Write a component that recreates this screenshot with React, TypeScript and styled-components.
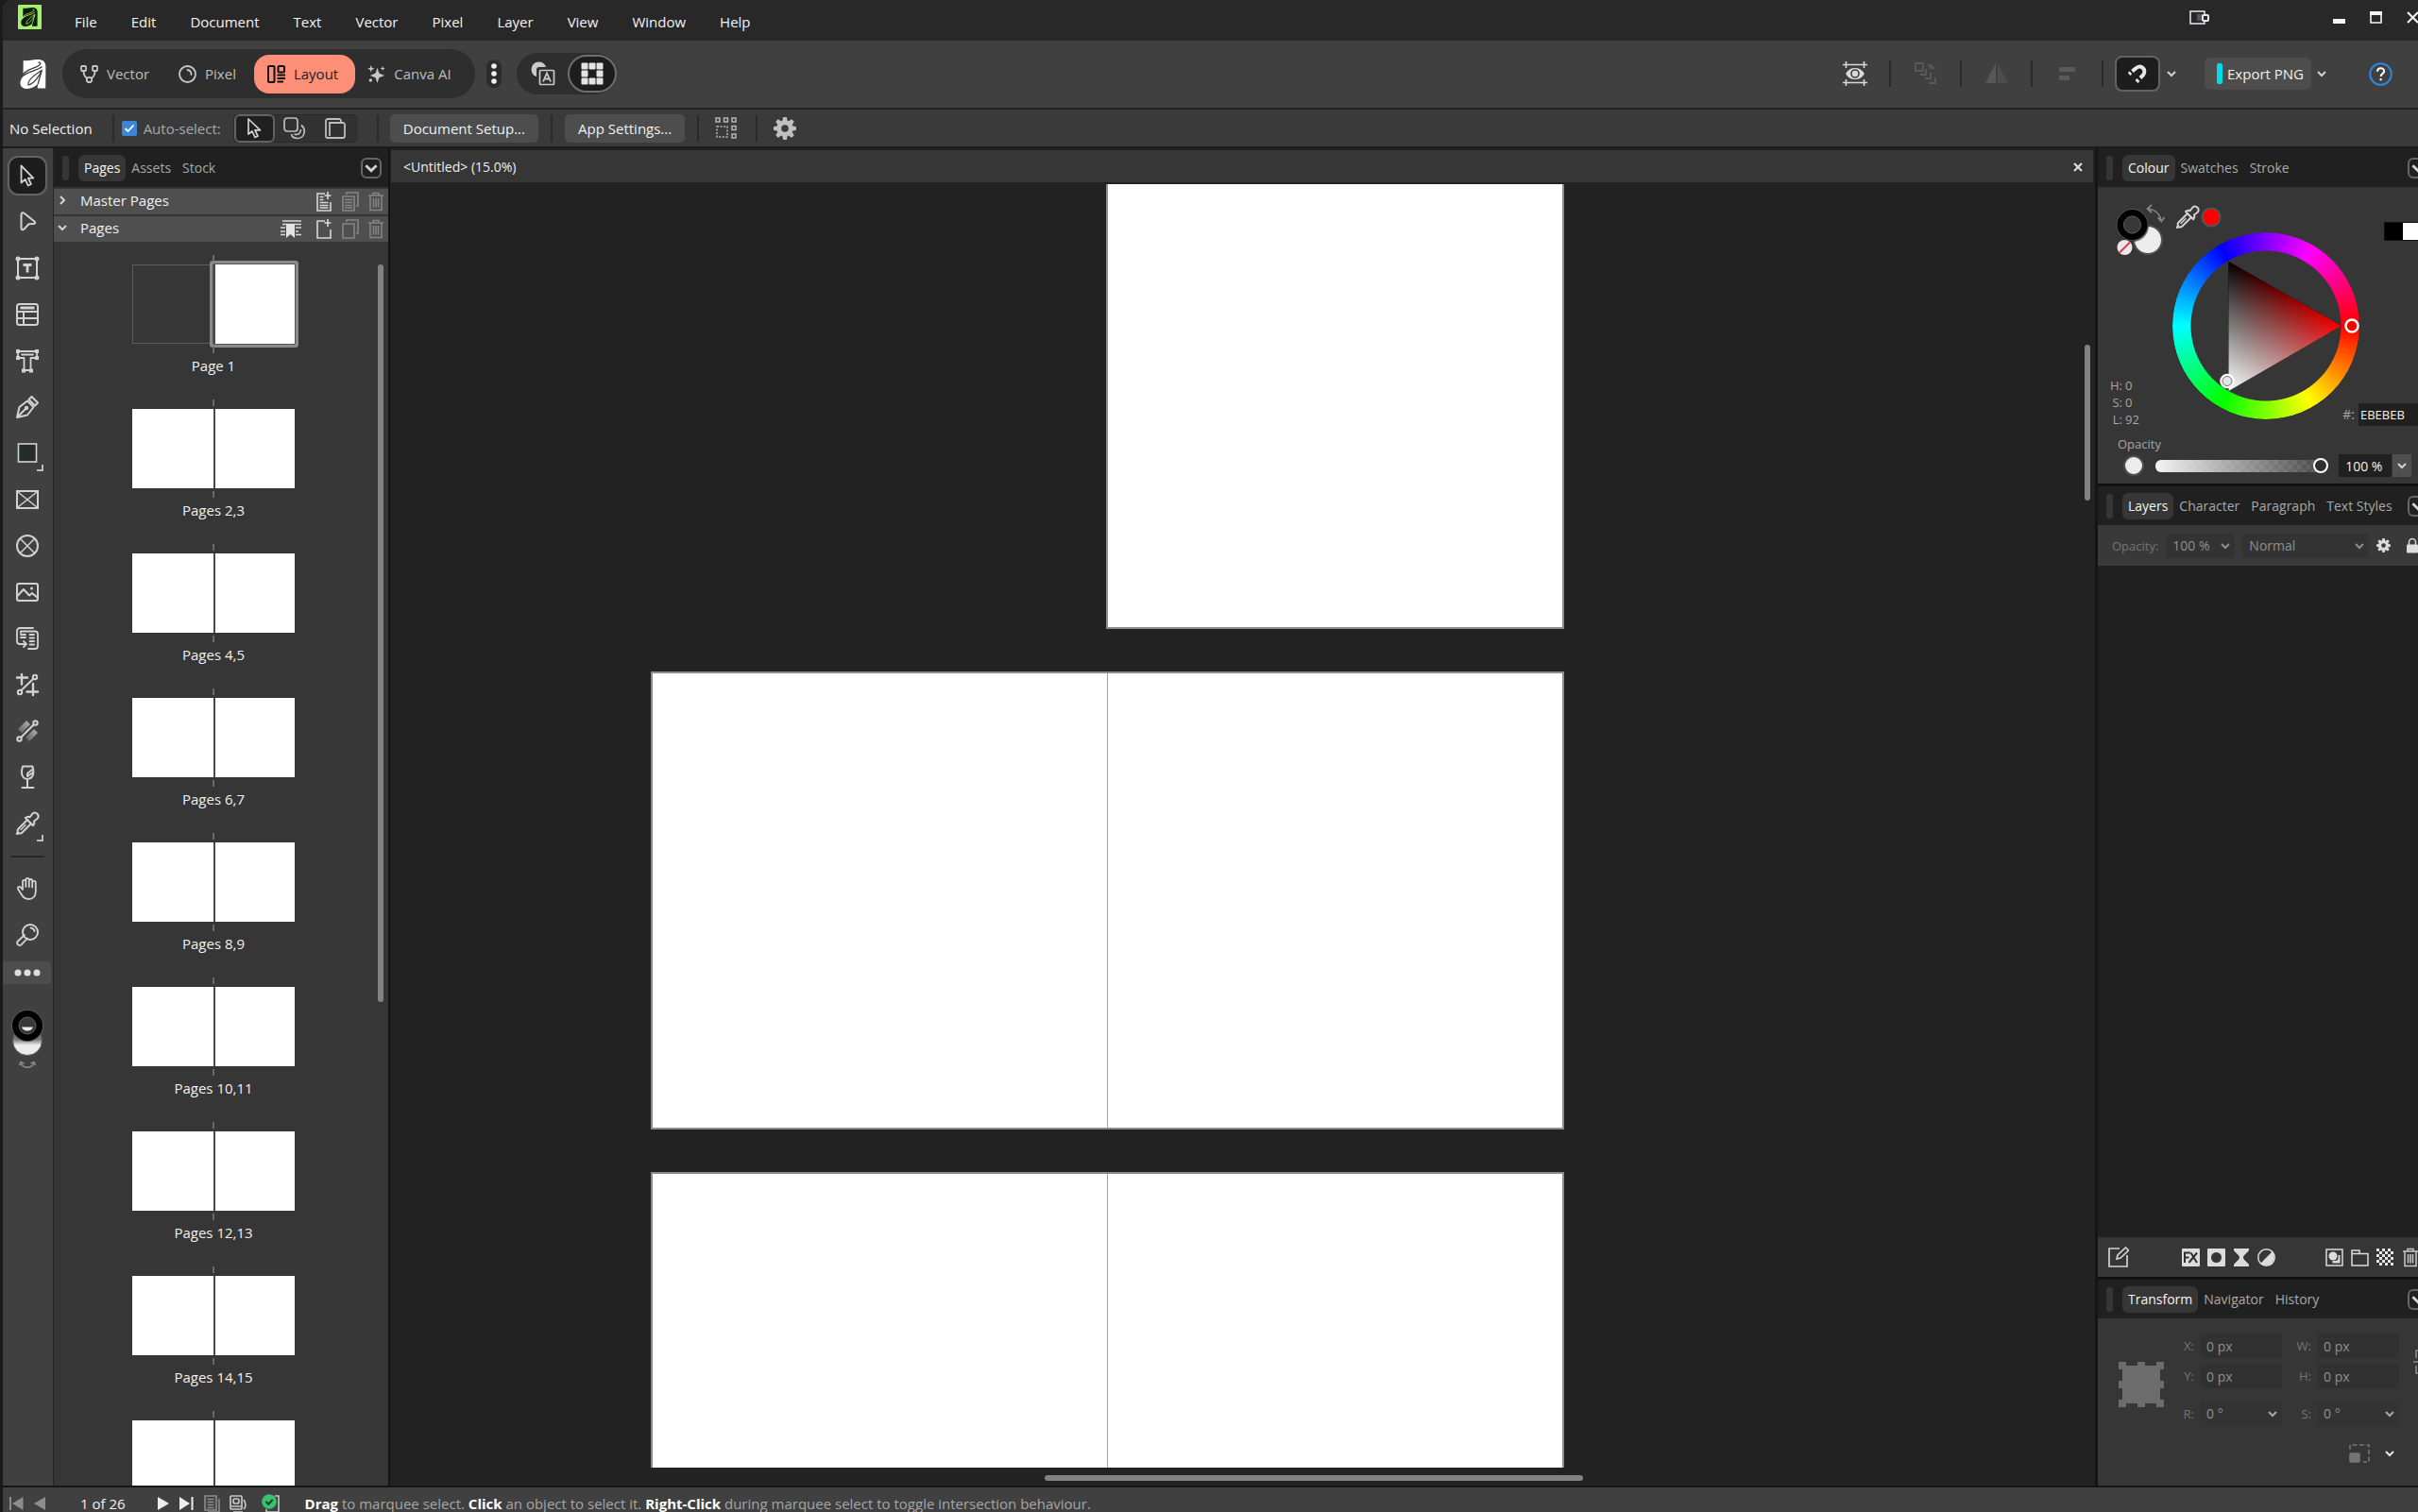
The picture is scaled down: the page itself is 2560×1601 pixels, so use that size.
import React from 'react';
import styled, { createGlobalStyle, css } from 'styled-components';

const GlobalStyle = createGlobalStyle`
  *, *::before, *::after { box-sizing: border-box; }
  html, body, #root { height: 100%; margin: 0; }
  body {
    overflow: hidden;
    background: #1b1b1d;
    color: #f0f0f0;
    font-family: 'Open Sans', 'Noto Sans', 'Liberation Sans', sans-serif;
    font-size: 15px;
    line-height: 20px;
  }
  button, input, select { font: inherit; color: inherit; margin: 0; }
  button { background: none; border: 0; padding: 0; cursor: pointer; }
  svg { display: block; flex: none; }
`;

/* ---------- window shell ---------- */

const Screen = styled.div`
  height: 100vh;
  overflow: hidden;
  padding-left: 3px;
`;

/* The window hangs a little past the right and bottom of the screen. */
const Window = styled.div`
  display: flex;
  flex-direction: column;
  width: calc(100% + 18px);
  height: calc(100% + 8px);
  border-top-left-radius: 10px;
  overflow: hidden;
  background: #404040;
`;

const TitleBar = styled.header`
  display: flex;
  align-items: center;
  height: 43px;
  padding: 0 17px 0 16px;
  background: #282828;
`;

const AppMark = styled.span`
  display: flex;
  align-self: flex-start;
  margin-top: 5px;
`;

const MenuBar = styled.nav`
  display: flex;
  gap: 36px;
  margin-left: 35px;
  padding-top: 2px;
`;

const MenuItem = styled.button`
  color: #f2f2f2;
`;

const WindowButtons = styled.div`
  display: flex;
  align-items: center;
  gap: 26px;
  margin-left: auto;
  padding-bottom: 6px;
`;

const ShareButton = styled.button`
  margin-right: 105px;
`;

/* ---------- main toolbar ---------- */

const Toolbar = styled.div`
  display: flex;
  align-items: center;
  height: 73px;
  padding: 0 45px 1px 18px;
  background: #404040;
  border-bottom: 2px solid #232323;
`;

const PersonaGroup = styled.div`
  display: flex;
  align-items: center;
  height: 52px;
  margin-left: 17px;
  padding: 0 7px;
  border-radius: 26px;
  background: #2e2e2e;
`;

const Persona = styled.button<{ $active?: boolean }>`
  display: flex;
  align-items: center;
  gap: 9px;
  height: 41px;
  padding: 0 18px 0 ${p => (p.$active ? 14 : 12)}px;
  border-radius: 16px;
  color: ${p => (p.$active ? '#1e1e1e' : '#bdbdbd')};
  background: ${p => (p.$active ? '#fd8e78' : 'transparent')};
`;

const PersonaList = styled.div`
  display: flex;
  gap: 1px;
`;

const MoreButton = styled.button`
  display: flex;
  align-items: center;
  justify-content: center;
  width: 16px;
  height: 30px;
  margin: 0 16px 0 12px;
  border-radius: 8px;
  background: #2c2c2c;
`;

const ViewGroup = styled.div`
  display: flex;
  align-items: center;
  height: 44px;
  padding-left: 12px;
  gap: 10px;
  border-radius: 22px;
  background: #2e2e2e;
`;

const ViewToggle = styled.button<{ $active?: boolean }>`
  display: flex;
  align-items: center;
  justify-content: center;
  width: ${p => (p.$active ? 52 : 32)}px;
  height: 40px;
  border-radius: 20px;
  ${p => p.$active && css`
    background: #1d1d1d;
    border: 2px solid #6e6e6e;
  `}
`;

const ToolbarEnd = styled.div`
  display: flex;
  align-items: center;
  margin-left: auto;
`;

const IconSlot = styled.button`
  display: flex;
  align-items: center;
  justify-content: center;
  width: 73px;
  height: 40px;
`;

const Rule = styled.span<{ $before?: number; $after?: number }>`
  width: 2px;
  height: 28px;
  margin: 0 ${p => p.$after ?? 0}px 0 ${p => p.$before ?? 0}px;
  background: #2a2a2a;
  flex: none;
`;

const SnapButton = styled.button`
  display: flex;
  align-items: center;
  justify-content: center;
  width: 48px;
  height: 38px;
  margin: 0 7px 0 12px;
  border-radius: 8px;
  border: 2px solid #626262;
  background: #1d1d1d;
`;

const ExportButton = styled.button`
  display: flex;
  align-items: center;
  gap: 5px;
  height: 34px;
  margin: 0 6px 0 30px;
  padding: 0 8px 0 13px;
  border-radius: 6px;
  background: #4d4d4d;
`;

const CyanBar = styled.span`
  width: 6px;
  height: 22px;
  border-radius: 2px;
  background: #00dbe8;
`;

const HelpButton = styled.button`
  display: flex;
  margin-left: 45px;
`;

/* ---------- context bar ---------- */

const ContextBar = styled.div`
  display: flex;
  align-items: center;
  height: 41px;
  padding: 0 7px;
  background: #3a3a3a;
  border-bottom: 2px solid #1c1c1c;
`;

const CheckLabel = styled.label`
  position: relative;
  display: flex;
  align-items: center;
  gap: 7px;
  margin-right: 13px;
  color: #a8a8a8;
`;

const CheckBox = styled.input`
  appearance: none;
  width: 16px;
  height: 16px;
  border-radius: 2px;
  background: #3b86d6;
`;

const CheckTick = styled.svg`
  position: absolute;
  left: 2px;
  top: 4px;
  pointer-events: none;
`;

const Segments = styled.div`
  display: flex;
  align-items: center;
  height: 30px;
  border-radius: 5px;
  background: #323232;
  border: 1px solid #2a2a2a;
`;

const Segment = styled.button<{ $active?: boolean }>`
  display: flex;
  align-items: center;
  justify-content: center;
  width: 43px;
  height: 30px;
  border-radius: 6px;
  ${p => p.$active && css`
    background: #202020;
    border: 2px solid #626262;
  `}
`;

const PlainButton = styled.button`
  height: 30px;
  padding: 0 14px;
  border-radius: 5px;
  background: #4d4d4d;
`;

/* ---------- workspace ---------- */

const Workspace = styled.main`
  display: flex;
  flex: 1;
  min-height: 0;
  background: #141414;
`;

const ToolRail = styled.aside`
  display: flex;
  flex-direction: column;
  align-items: center;
  gap: 7px;
  width: 54px;
  padding: 8px 2px 0 0;
  background: #404040;
  border-right: 1px solid #252525;
`;

const Tool = styled.button<{ $active?: boolean }>`
  position: relative;
  display: flex;
  align-items: center;
  justify-content: center;
  flex: none;
  width: 42px;
  height: 42px;
  border-radius: 11px;
  ${p => p.$active && css`
    background: #1d1d1d;
    border: 2px solid #626262;
  `}
`;

/* Corner mark on tools that open a flyout. */
const FlyoutMark = styled.span`
  position: absolute;
  right: 4px;
  bottom: 2px;
  width: 7px;
  height: 7px;
  border: solid #bdbdbd;
  border-width: 0 2px 2px 0;
`;

const RailRule = styled.span`
  width: 36px;
  height: 2px;
  margin: 6px 0 5px;
  background: #272727;
`;

const RailMore = styled.button`
  display: flex;
  align-items: center;
  justify-content: center;
  align-self: stretch;
  height: 24px;
  border-radius: 2px;
  background: #4d4d4d;
`;

const RailSwatch = styled.button`
  margin-top: 19px;
`;

/* ---------- panels ---------- */

const SidePanel = styled.aside<{ $width: number }>`
  display: flex;
  flex-direction: column;
  width: ${p => p.$width}px;
  flex: none;
  background: #363636;
`;

const PanelHead = styled.div`
  display: flex;
  align-items: center;
  flex: none;
  height: 41px;
  padding: 0 7px 0 9px;
  background: #202020;
`;

const Grip = styled.span`
  width: 7px;
  height: 26px;
  margin-right: 10px;
  border-radius: 3px;
  background: #363636;
`;

const Tab = styled.button<{ $active?: boolean }>`
  height: 28px;
  padding: 0 6px;
  border-radius: 6px;
  font-size: 14px;
  color: ${p => (p.$active ? '#f5f5f5' : '#a9a9a9')};
  background: ${p => (p.$active ? '#363636' : 'transparent')};
`;

const PanelMenu = styled.button`
  display: flex;
  align-items: center;
  justify-content: center;
  width: 22px;
  height: 22px;
  margin-left: auto;
  border: 2px solid #666;
  border-radius: 6px;
`;

const SectionRow = styled.div`
  display: flex;
  align-items: center;
  flex: none;
  height: 27px;
  margin-top: 2px;
  padding: 0 5px 0 4px;
  background: #4f4f4f;
`;

const SectionTitle = styled.button`
  display: flex;
  align-items: center;
  gap: 14px;
  margin-right: auto;
  padding-bottom: 3px;
`;

const SectionIcons = styled.div`
  display: flex;
  gap: 10px;
`;

const PageScroller = styled.div`
  display: flex;
  flex: 1;
  min-height: 0;
  overflow: hidden;
  background: #363636;
`;

const SpreadList = styled.ol`
  flex: 1;
  margin: 0;
  padding: 14px 5px 0 0;
  list-style: none;
`;

const SpreadItem = styled.li`
  display: flex;
  flex-direction: column;
  align-items: center;
  height: 153px;
`;

const Spread = styled.button`
  position: relative;
  display: flex;
  height: 104px;
  padding: 10px 0;
`;

const Leaf = styled.span<{ $kind?: 'empty' | 'selected' }>`
  width: 86px;
  height: 84px;
  background: ${p => (p.$kind === 'empty' ? 'transparent' : '#fff')};
  ${p => !p.$kind && css`& + & { border-left: 2px solid #4a4a4a; }`}
  ${p => p.$kind === 'empty' && css`box-shadow: inset 0 0 0 1px #5c5c5c;`}
  ${p => p.$kind === 'selected' && css`
    border-radius: 1px;
    box-shadow: 0 0 0 1px #555, 0 0 0 4px #8a8a8a;
  `}
`;

const SpineTick = styled.span<{ $end?: boolean }>`
  position: absolute;
  left: 85px;
  ${p => (p.$end ? 'bottom: 0;' : 'top: 0;')}
  width: 2px;
  height: 7px;
  background: #6a6a6a;
`;

const SpreadLabel = styled.span`
  margin-top: 3px;
`;

const ScrollThumb = styled.span<{ $size: number; $start: number; $horizontal?: boolean }>`
  flex: none;
  border-radius: 3px;
  background: #828282;
  ${p => p.$horizontal
    ? css`height: 6px; width: ${p.$size}px; margin-left: ${p.$start}px;`
    : css`width: 6px; height: ${p.$size}px; margin-top: ${p.$start}px;`}
`;

const ScrollRail = styled.div`
  display: flex;
  width: 11px;
  flex: none;
`;

/* ---------- document view ---------- */

const DocumentArea = styled.section`
  display: flex;
  flex-direction: column;
  flex: 1;
  min-width: 0;
  margin: 0 3px 0 2px;
  background: #222;
`;

const DocTab = styled.div`
  display: flex;
  align-items: center;
  justify-content: space-between;
  flex: none;
  height: 34px;
  margin: 2px 2px 2px 1px;
  padding: 1px 11px 0 13px;
  font-size: 14px;
  background: #363636;
`;

const CanvasRow = styled.div`
  display: flex;
  flex: 1;
  min-height: 0;
`;

const Canvas = styled.div`
  display: flex;
  flex-direction: column;
  flex: 1;
  gap: 45px;
  overflow: hidden;
  padding-left: 276px;
`;

const CanvasSpread = styled.div<{ $first?: boolean }>`
  display: flex;
  flex: none;
  width: ${p => (p.$first ? 485 : 967)}px;
  height: ${p => (p.$first ? 471 : 485)}px;
  margin-left: ${p => (p.$first ? 482 : 0)}px;
  border: 2px solid #8c8c8c;
  border-top-width: ${p => (p.$first ? 0 : 2)}px;
  background: #fff;
`;

const CanvasPage = styled.div`
  flex: 1;
  & + & { border-left: 1px solid #a0a0a0; }
`;

const CanvasFoot = styled.div`
  flex: none;
  height: 19px;
  padding-top: 8px;
`;

/* ---------- colour panel ---------- */

const Block = styled.section<{ $grow?: boolean }>`
  display: flex;
  flex-direction: column;
  flex: ${p => (p.$grow ? 1 : 'none')};
  min-height: 0;
  border-bottom: 3px solid #111;
`;

const ColourGrid = styled.div`
  display: grid;
  grid-template-columns: 66px 198px 1fr;
  grid-template-rows: 48px 210px;
  padding: 0 14px 0 13px;
`;

const SwatchPair = styled.button`
  grid-area: 1 / 1 / 3 / 2;
  align-self: start;
  justify-self: start;
  margin: 17px 0 0 2px;
`;

const PickerRow = styled.div`
  grid-area: 1 / 2;
  display: flex;
  align-items: center;
  gap: 1px;
  height: 26px;
  margin: 19px 0 0 3px;
`;

const WheelBox = styled.div`
  grid-area: 2 / 2;
  position: relative;
  width: 198px;
  height: 198px;
`;

const HueRing = styled.div`
  width: 198px;
  height: 198px;
  border-radius: 50%;
  background: conic-gradient(from 90deg, #f00, #ff0, #0f0, #0ff, #00f, #f0f, #f00);
  mask: radial-gradient(circle, transparent 79px, #000 80px);
`;

const WheelOverlay = styled.svg`
  position: absolute;
  inset: 0;
`;

const HslList = styled.dl`
  grid-area: 2 / 1;
  align-self: end;
  display: grid;
  grid-template-columns: 13px 1fr;
  column-gap: 3px;
  margin: 0 0 3px;
  font-size: 13px;
  line-height: 18px;
  color: #a6a6a6;
  dt { text-align: right; }
  dd { margin: 0; }
`;

const MonoSwatches = styled.div`
  grid-area: 1 / 3 / 3 / 4;
  justify-self: end;
  display: flex;
  width: 40px;
  height: 20px;
  margin-top: 37px;
  border: 1px solid #111;
  background: linear-gradient(to right, #000 50%, #fff 50%);
`;

const HexLabel = styled.label`
  grid-area: 2 / 2 / 3 / 4;
  align-self: end;
  justify-self: end;
  display: flex;
  align-items: center;
  gap: 4px;
  margin-bottom: 5px;
  font-size: 14px;
  color: #a6a6a6;
`;

const HexInput = styled.input`
  width: 67px;
  height: 24px;
  padding: 0 2px;
  border: 0;
  background: #202020;
  color: #f0f0f0;
  font-size: 13px;
`;

const OpacityTitle = styled.label`
  padding: 5px 0 0 21px;
  font-size: 13px;
  line-height: 18px;
  color: #a6a6a6;
`;

const OpacityRow = styled.div`
  display: flex;
  align-items: center;
  height: 33px;
  padding: 0 25px 5px 27px;
`;

const OpacityDot = styled.span`
  width: 22px;
  height: 22px;
  margin-right: 12px;
  border-radius: 50%;
  border: 2px solid #4e4e4e;
  background: #ececec;
`;

const OpacitySlider = styled.input`
  appearance: none;
  width: 185px;
  height: 13px;
  margin-right: 11px;
  border-radius: 6px;
  background:
    linear-gradient(to right, #f4f4f4, rgba(54, 54, 54, 0.88)),
    repeating-conic-gradient(#fff 0 25%, #888 0 50%) 0 0 / 10px 10px;
  &::-webkit-slider-thumb {
    appearance: none;
    width: 16px;
    height: 16px;
    border-radius: 50%;
    border: 2px solid #fff;
    background: #2e2e2e;
  }
`;

const OpacityValue = styled.input`
  width: 56px;
  height: 24px;
  margin-right: 1px;
  padding: 0 7px;
  border: 0;
  background: #202020;
  font-size: 14px;
`;

const DropButton = styled.button`
  display: flex;
  align-items: center;
  justify-content: center;
  width: 20px;
  height: 24px;
  background: #4f4f4f;
`;

/* ---------- layers panel ---------- */

const LayerOptions = styled.div`
  display: flex;
  align-items: center;
  height: 43px;
  padding: 0 14px 0 15px;
  font-size: 13px;
  color: #757575;
  background: #393939;
`;

const SelectWrap = styled.span<{ $width: number; $gap?: number }>`
  position: relative;
  display: flex;
  align-items: center;
  width: ${p => p.$width}px;
  margin-left: ${p => p.$gap ?? 0}px;
  svg { position: absolute; right: 5px; pointer-events: none; }
`;

const FlatSelect = styled.select`
  appearance: none;
  width: 100%;
  height: 26px;
  padding: 0 7px;
  border: 0;
  border-radius: 4px;
  background: #333;
  color: #8f8f8f;
  font-size: 14px;
`;

const IconButton = styled.button<{ $gap?: number }>`
  margin-left: ${p => p.$gap ?? 0}px;
`;

const LayerList = styled.div`
  flex: 1;
  background: #202020;
`;

const LayerActions = styled.div`
  display: flex;
  align-items: center;
  flex: none;
  height: 42px;
  padding: 0 17px 0 11px;
  background: #363636;
`;

/* ---------- transform panel ---------- */

const TransformBody = styled.div`
  display: flex;
  height: 177px;
  padding: 16px 0 0 22px;
`;

const AnchorButton = styled.button`
  align-self: flex-start;
  margin: 30px 1px 0 0;
`;

const FieldColumn = styled.div`
  display: flex;
  flex-direction: column;
  gap: 6px;
`;

const Field = styled.label<{ $spaced?: boolean }>`
  display: flex;
  align-items: center;
  justify-content: flex-end;
  gap: 6px;
  width: 124px;
  height: 26px;
  margin-top: ${p => (p.$spaced ? 8 : 0)}px;
  font-size: 13px;
  color: #757575;
`;

const FieldInput = styled.input`
  width: 87px;
  height: 26px;
  padding: 0 7px;
  border: 0;
  border-radius: 4px;
  background: #313131;
  color: #8f8f8f;
  font-size: 14px;
`;

const ScaleRow = styled.div`
  display: flex;
  align-items: center;
  justify-content: flex-end;
  gap: 16px;
  padding: 13px 5px 0 0;
`;

const LinkButton = styled.button`
  align-self: flex-start;
  margin: 16px 0 0 15px;
`;

/* ---------- status bar ---------- */

const StatusBar = styled.footer`
  display: flex;
  align-items: center;
  flex: none;
  height: 36px;
  padding: 0 7px;
  border-top: 2px solid #161616;
  line-height: 18px;
  background: #404040;
`;

const PageCount = styled.span`
  margin: 0 34px 0 37px;
`;

const StatusHint = styled.p`
  margin: 0 0 0 26px;
  color: #a6a6a6;
  b { color: #fff; font-weight: 700; }
`;

/* ---------- drawings ---------- */

const INK = '#d2d2d2';

type IconProps = { size?: number; color?: string; width?: number; children: React.ReactNode };
const Glyph = ({ size = 26, color = INK, width = 2, children }: IconProps) => (
  <svg width={size} height={size} viewBox="0 0 26 26" fill="none" stroke={color} strokeWidth={width}
    strokeLinecap="round" strokeLinejoin="round">{children}</svg>
);

const Chevron = ({ color = INK, dir = 'down', size = 10 }: { color?: string; dir?: 'down' | 'right'; size?: number }) => (
  <svg width={size} height={size} viewBox="0 0 10 10" fill="none" stroke={color} strokeWidth="2">
    <path d={dir === 'down' ? 'M1 3l4 4 4-4' : 'M3 1l4 4-4 4'} />
  </svg>
);

/* Brand mark: a solid body with three thin slits cut through it. */
const BrandShape = ({ color, cut }: { color: string; cut: string }) => (
  <>
    <path fill={color} d="M3.200 1C8 2 12 0 18 0c6 0 8.900 2.400 8.900 7.500L26.700 30.500H18.200c0-2 .3-3.400 1-5.200C15.500 29.300 11.500 31 7.300 31 2.500 31 0 28.600 0 25c0-5 4-8.600 8.500-10.500L3 16z" />
    <g fill="none" stroke={cut}>
      <path d="M2 16.500C7 10 14 10 19.500 6.500c2.500-1.600 2.500-3.500-.5-3.500" strokeWidth="1.300" />
      <path d="M3 17c6-5 15-5 20-9.500" strokeWidth="1.300" />
      <path d="M8.500 27C7.500 23 13 17.500 22.500 11.500 20.500 18 13 26.500 8.500 27z" strokeWidth="1.200" />
      <path d="M22.800 11.500L18.600 26" strokeWidth="1.300" />
    </g>
  </>
);

const Mark = () => (
  <svg width="28" height="31" viewBox="0 0 27 31"><BrandShape color="#fff" cut="#404040" /></svg>
);

const AppIcon = () => (
  <svg width="25" height="26" viewBox="0 0 25 26">
    <rect width="25" height="26" rx="1" fill="#a4f06c" />
    <svg x="3" y="3" width="18" height="20" viewBox="0 0 27 31"><BrandShape color="#0c1a08" cut="#a4f06c" /></svg>
  </svg>
);

const Trash = ({ color = '#858585' }: { color?: string }) => (
  <svg width="16" height="21" viewBox="0 0 16 21" fill="none" stroke={color} strokeWidth="1.500">
    <path d="M0 4h16M5 4V1.500h6V4M2 4v15.500h12V4M5.500 7v9.500M8 7v9.500M10.500 7v9.500" />
  </svg>
);

const gearTeeth = Array.from({ length: 8 }, (_, i) => i * 45);
const Gear = ({ size, color, hole }: { size: number; color: string; hole: string }) => (
  <svg width={size} height={size} viewBox="-12 -12 24 24" fill={color}>
    <circle r="8.500" />
    {gearTeeth.map(a => <path key={a} d="M-3-7l1.200-5h3.600L3-7z" transform={`rotate(${a})`} />)}
    <circle r="3.800" fill={hole} />
  </svg>
);

const EyedropperShape = () => (
  <>
    <path d="M13 9l-9.500 9.500a2.800 2.800 0 0 0-.6 3.200L1.800 24 4.200 23.300a2.800 2.800 0 0 0 3-.6L17 13" />
    <path d="M11 7l2.500-1.200 2.200.4 2.800-3.700a3.700 3.700 0 0 1 5.200 5.200L20 10.500l.4 2.200-1.400 2.500z" />
    <path d="M6 19.500l5-5" strokeWidth="1.500" />
  </>
);

const toolIcons: { name: string; flyout?: boolean; icon: React.ReactNode }[] = [
  { name: 'Move', icon: <Glyph><path d="M6.500 2.500v18l4.200-3.600 3 6.600 3.200-1.500-3-6.400h5.400z" strokeWidth="1.800" /></Glyph> },
  { name: 'Node', icon: <Glyph><path d="M6.500 5.500c0-2 1.400-2.800 3-1.700L20.500 12.500c1.300 1.100.8 2.300-.8 2.400l-5.200.4-5 5.300c-1.300 1.200-3 .8-3-1.200z" /></Glyph> },
  { name: 'Frame Text', icon: <Glyph><rect x="3" y="3" width="20" height="20" /><path d="M8.500 9.500h9M13 9.500V17.500" strokeWidth="2.800" strokeLinecap="butt" />{[[3, 3], [23, 3], [3, 23], [23, 23]].map(([x, y]) => <circle key={`${x}${y}`} cx={x} cy={y} r="1.500" fill={INK} stroke={INK} />)}</Glyph> },
  { name: 'Table', icon: <Glyph><rect x="2" y="2" width="22" height="22" rx="2.500" /><path d="M5.500 6h15" strokeWidth="3" strokeLinecap="butt" /><path d="M2 10h22M2 17h22M9 10v14" /></Glyph> },
  { name: 'Artistic Text', icon: <Glyph width={1.800}><path d="M3 3h20v7h-6.500v13h-7V10H3zM7 6.500h12" />{[[3, 3], [23, 3], [3, 10], [23, 10], [9, 23.500], [17, 23.500]].map(([x, y]) => <rect key={`${x}-${y}`} x={x - 2} y={y - 2} width="4" height="4" fill={INK} stroke="none" />)}</Glyph> },
  { name: 'Pen', icon: <Glyph><path d="M2 24l2.500-11L13 6.500 19.500 13 13 21.500 2 24zM3 23l8.500-8.500" /><circle cx="12" cy="14" r="1.200" fill={INK} /><path d="M14.500 5l3-3 6.500 6.500-3 3z" /></Glyph> },
  { name: 'Rectangle', flyout: true, icon: <Glyph><rect x="3.500" y="3" width="19" height="19" fill="#232b2b" strokeWidth="1.600" strokeLinejoin="miter" /></Glyph> },
  { name: 'Picture Frame', icon: <Glyph><rect x="2" y="4" width="22" height="18" strokeLinejoin="miter" /><path d="M3 5l20 16M23 5L3 21" strokeWidth="1.500" /></Glyph> },
  { name: 'Ellipse Frame', icon: <Glyph><circle cx="13" cy="13" r="11" /><path d="M5.500 5.500l15 15M20.500 5.500l-15 15" strokeWidth="1.500" /></Glyph> },
  { name: 'Place Image', icon: <Glyph><rect x="2" y="4" width="22" height="18" rx="2" /><path d="M2 17.500L9 10l6 6.500 3-2.500 6 5" /><circle cx="17.500" cy="9" r="1.500" fill={INK} stroke="none" /></Glyph> },
  { name: 'Text Flow', icon: <Glyph width={1.800}><path d="M19 2H5a3 3 0 0 0-3 3v11c0 2 1 3 3 3h6M9 16l3 3-3 3M6 7V5.500h15a3 3 0 0 1 3 3V21a3 3 0 0 1-3 3h-7" /><path d="M6 9h5M6 12h5M15.500 9H20M15.500 12.500H20M15.500 16H20M15.500 19.500H20" /></Glyph> },
  { name: 'Crop', icon: <Glyph><path d="M7 2v10.500M2 5.500h11M19 12v12M12.500 20.500H24" strokeWidth="2.400" /><path d="M6.500 19L19.500 6.500" /><circle cx="5" cy="21" r="2.200" /><circle cx="21" cy="5" r="2.200" /></Glyph> },
  { name: 'Gradient', icon: <Glyph><defs><linearGradient id="band" x1="1" y1="0" x2="0" y2="1"><stop stopColor="#d0d0d0" /><stop offset="1" stopColor="#404040" /></linearGradient></defs><path d="M3 11L12 2l4 4-9 9zM11 20l9-9 4 4-9 9z" fill="url(#band)" stroke="none" /><path d="M6 20L20 6" /><circle cx="4.500" cy="21.500" r="2.200" fill="#404040" /><circle cx="21.500" cy="4.500" r="2.200" fill="#404040" /></Glyph> },
  { name: 'Transparency', icon: <Glyph><path d="M8 1.500h10.500c1.500 5 2 12.500-5.500 13.500C5.500 14 6.500 6 8 1.500zM13 15v9M7.500 24h12" /><path d="M18 5l-5 4v3l6-4" /></Glyph> },
  { name: 'Colour Picker', flyout: true, icon: <Glyph><EyedropperShape /></Glyph> },
];

const HandIcon = () => (
  <Glyph><path d="M8 14V5.500a1.700 1.700 0 0 1 3.400 0V3.500a1.700 1.700 0 0 1 3.400 0v1.200a1.700 1.700 0 0 1 3.400 0v2a1.700 1.700 0 0 1 3.600 0V16c0 5-3 8-7.500 8-4 0-6-2-8-5.500L3 13.200c-.8-2 1.600-3 3-1.500L8 14M11.400 5.500v5.500M14.800 4.500V11M18.200 6.500V11.500" strokeWidth="1.800" /></Glyph>
);
const ZoomIcon = () => (
  <Glyph><circle cx="16" cy="10" r="8" /><path d="M16.500 5.500a4.500 4.500 0 0 1 4 3.500M10 13l-7 6.500c-2.500 2.500 1.200 6 3.500 3.800L13 16.500" strokeWidth="1.800" /></Glyph>
);

const StrokeFillStack = () => (
  <svg width="34" height="66" viewBox="0 0 34 66">
    <defs>
      <linearGradient id="fillShade" x1="0" y1="0" x2="0" y2="1"><stop offset=".45" stopColor="#777" /><stop offset=".65" stopColor="#ececec" /></linearGradient>
    </defs>
    <circle cx="17" cy="34" r="15.500" fill="url(#fillShade)" stroke="#555" />
    <circle cx="17" cy="18" r="16.500" fill="#383838" stroke="#5a5a5a" />
    <circle cx="17" cy="18" r="12.500" fill="none" stroke="#000" strokeWidth="7" />
    <circle cx="17" cy="18" r="9" fill="#383838" stroke="#5a5a5a" />
    <path d="M11 19.500h12a6.500 6.500 0 0 1-12 0z" fill="#ececec" />
    <path d="M10 57c2 7 12 7 14 0M8.500 60l1.500-3.500 3.500 1.500M25.500 60L24 56.500 20.500 58" fill="none" stroke="#8a8a8a" strokeWidth="1.500" />
  </svg>
);

const AddPage = ({ lines }: { lines?: boolean }) => (
  <svg width="17" height="21" viewBox="0 0 17 21" fill="none" stroke="#d8d8d8" strokeWidth="1.600">
    <path d="M9 2H1v18h14v-9M12 0v8M8.500 4h7" />
    {lines && <path d="M3.500 5.500h4M3.500 8.500h4M3.500 11.500h9M3.500 14.500h9M3.500 17h9" strokeWidth="1.400" />}
  </svg>
);
const CopyPage = ({ lines }: { lines?: boolean }) => (
  <svg width="18" height="21" viewBox="0 0 18 21" fill="none" stroke="#858585" strokeWidth="1.600">
    <path d="M1 5h12v15H1zM5 3V1h12v14h-2" />
    {lines && <path d="M3 8.500h8M3 11.500h8M3 14.500h8M3 17h8" strokeWidth="1.500" />}
  </svg>
);

const triangle = 'M59.500 31L179 99 59.500 168z';

/* ---------- sections ---------- */

const menus = ['File', 'Edit', 'Document', 'Text', 'Vector', 'Pixel', 'Layer', 'View', 'Window', 'Help'];

const personas: { name: string; active?: boolean; icon: React.ReactNode }[] = [
  { name: 'Vector', icon: <svg width="19" height="19" viewBox="0 0 19 19" fill="none" stroke="#c6c6c6" strokeWidth="1.800"><rect x="1" y="1" width="5" height="5" rx="1" /><rect x="13" y="1" width="5" height="5" rx="1" /><circle cx="9.500" cy="15.500" r="2.700" /><path d="M3.500 6c0 4 1 6.500 4 8M15.500 6c0 4-1 6.500-4 8" /></svg> },
  { name: 'Pixel', icon: <svg width="19" height="19" viewBox="0 0 19 19" fill="none" stroke="#c6c6c6" strokeWidth="1.800"><circle cx="9.500" cy="9.500" r="8.500" /><path d="M9.500 5a4.500 4.500 0 0 1 4 5" strokeLinecap="round" /></svg> },
  { name: 'Layout', active: true, icon: <svg width="19" height="19" viewBox="0 0 19 19" fill="none" stroke="#111" strokeWidth="2"><rect x="1" y="1" width="6.500" height="17" rx="1" /><rect x="11.500" y="1" width="6.500" height="6.500" rx="1" /><path d="M10.500 10.500H19M10.500 14H19M10.500 17.500H17" strokeWidth="1.800" /></svg> },
  { name: 'Canva AI', icon: <svg width="19" height="19" viewBox="0 0 20 20" fill="#c6c6c6"><path d="M11 3l2 6 6 2.500-6 2.500-2 6-2-6-6-2.500L9 9zM4 0l1 3 3 1-3 1-1 3-1-3-3-1 3-1zM17 1l.7 2 2 .7-2 .7-.7 2-.7-2-2-.7 2-.7zM3.500 15a1.800 1.800 0 1 1 0 3.600 1.800 1.800 0 0 1 0-3.600z" /></svg> },
];

const Panel = ({ tabs }: { tabs: string[] }) => (
  <PanelHead>
    <Grip />
    {tabs.map((t, i) => <Tab key={t} $active={i === 0}>{t}</Tab>)}
    <PanelMenu aria-label={`${tabs[0]} panel menu`}><Chevron size={14} /></PanelMenu>
  </PanelHead>
);

const spreads = ['Page 1', 'Pages 2,3', 'Pages 4,5', 'Pages 6,7', 'Pages 8,9', 'Pages 10,11', 'Pages 12,13', 'Pages 14,15'];

const SpreadThumb = ({ name, first }: { name: string; first?: boolean }) => (
  <Spread aria-label={name}>
    <SpineTick />
    <Leaf $kind={first ? 'empty' : undefined} />
    <Leaf $kind={first ? 'selected' : undefined} />
    <SpineTick $end />
  </Spread>
);

const PagesPanel = () => (
  <SidePanel $width={354}>
    <Panel tabs={['Pages', 'Assets', 'Stock']} />
    <SectionRow>
      <SectionTitle><Chevron dir="right" />Master Pages</SectionTitle>
      <SectionIcons>
        <button aria-label="Add master"><AddPage lines /></button>
        <button aria-label="Duplicate master"><CopyPage lines /></button>
        <button aria-label="Delete master"><Trash /></button>
      </SectionIcons>
    </SectionRow>
    <SectionRow>
      <SectionTitle><Chevron />Pages</SectionTitle>
      <SectionIcons>
        <button aria-label="Section manager">
          <svg width="28" height="20" viewBox="0 0 28 20" stroke="#d8d8d8" strokeWidth="1.600">
            <path d="M2 1h20M2 4.500h20M0 8h5M16 8h6M0 12h5M16 12h3M0 15.500h5M16 15.500h6" />
            <path d="M6 4h9v15l-4.500-4L6 19z" fill="#e4e4e4" stroke="none" />
          </svg>
        </button>
        <button aria-label="Add page"><AddPage /></button>
        <button aria-label="Duplicate page"><CopyPage /></button>
        <button aria-label="Delete page"><Trash /></button>
      </SectionIcons>
    </SectionRow>
    <PageScroller>
      <SpreadList>
        {spreads.map((name, i) => (
          <SpreadItem key={name}>
            <SpreadThumb name={name} first={i === 0} />
            <SpreadLabel>{name}</SpreadLabel>
          </SpreadItem>
        ))}
        <SpreadItem><SpreadThumb name="Pages 16,17" /></SpreadItem>
      </SpreadList>
      <ScrollRail><ScrollThumb $size={781} $start={24} /></ScrollRail>
    </PageScroller>
  </SidePanel>
);

const ColourPanel = () => (
  <Block>
    <Panel tabs={['Colour', 'Swatches', 'Stroke']} />
    <ColourGrid>
      <SwatchPair aria-label="Stroke and fill">
        <svg width="56" height="56" viewBox="0 0 56 56">
          <circle cx="38" cy="39" r="15" fill="#ececec" stroke="#505050" strokeWidth="2" />
          <circle cx="22" cy="24" r="17" fill="#222" opacity=".6" />
          <circle cx="21.500" cy="23" r="16.500" fill="#383838" stroke="#555" />
          <circle cx="21.500" cy="23" r="12.700" fill="none" stroke="#000" strokeWidth="6.500" />
          <circle cx="21.500" cy="23" r="9" fill="#383838" stroke="#555" />
          <circle cx="13.500" cy="47" r="8" fill="#e8e8e8" />
          <path d="M8 52.500L19 41.500" stroke="#e8304a" strokeWidth="1.800" />
          <path d="M38 6c8 1 13 6 14 13M42 2l-4.500 4 4.500 4M48.500 15.500l4 4 3-4.500" fill="none" stroke="#868686" strokeWidth="1.700" />
        </svg>
      </SwatchPair>
      <PickerRow>
        <button aria-label="Pick colour"><Glyph><EyedropperShape /></Glyph></button>
        <svg width="22" height="22" viewBox="0 0 22 22"><circle cx="11" cy="11" r="9.500" fill="red" stroke="#555" strokeWidth="2" /></svg>
      </PickerRow>
      <WheelBox>
        <HueRing />
        <WheelOverlay width="198" height="198" viewBox="0 0 198 198">
          <defs>
            <linearGradient id="toWhite" gradientUnits="userSpaceOnUse" x1="119" y1="65" x2="59.500" y2="168"><stop stopColor="#000" /><stop offset="1" stopColor="#fff" /></linearGradient>
            <linearGradient id="toRed" gradientUnits="userSpaceOnUse" x1="59.500" y1="0" x2="179" y2="0"><stop stopColor="#000" /><stop offset="1" stopColor="#f00" /></linearGradient>
          </defs>
          <g style={{ isolation: 'isolate' }}>
            <path d={triangle} fill="url(#toWhite)" />
            <path d={triangle} fill="url(#toRed)" style={{ mixBlendMode: 'screen' }} />
          </g>
          <circle cx="190" cy="99" r="6.500" fill="red" stroke="#fff" strokeWidth="2.500" />
          <circle cx="58" cy="157.500" r="6.500" fill="#e4e4e4" stroke="#fff" strokeWidth="2.500" />
          <circle cx="58" cy="157.500" r="5" fill="none" stroke="#777" />
        </WheelOverlay>
      </WheelBox>
      <HslList>
        <dt>H:</dt><dd>0</dd>
        <dt>S:</dt><dd>0</dd>
        <dt>L:</dt><dd>92</dd>
      </HslList>
      <MonoSwatches />
      <HexLabel>#: <HexInput defaultValue="EBEBEB" /></HexLabel>
    </ColourGrid>
    <OpacityTitle htmlFor="opacity">Opacity</OpacityTitle>
    <OpacityRow>
      <OpacityDot />
      <OpacitySlider id="opacity" type="range" defaultValue={100} />
      <OpacityValue aria-label="Opacity value" defaultValue="100 %" />
      <DropButton aria-label="Opacity presets"><Chevron /></DropButton>
    </OpacityRow>
  </Block>
);

const LayersPanel = () => (
  <Block $grow>
    <Panel tabs={['Layers', 'Character', 'Paragraph', 'Text Styles']} />
    <LayerOptions>
      <label htmlFor="layer-opacity">Opacity:</label>
      <SelectWrap $width={73} $gap={8}><FlatSelect id="layer-opacity"><option>100 %</option></FlatSelect><Chevron color="#8f8f8f" /></SelectWrap>
      <SelectWrap $width={134} $gap={8}><FlatSelect aria-label="Blend mode"><option>Normal</option></FlatSelect><Chevron color="#8f8f8f" /></SelectWrap>
      <IconButton $gap={8} aria-label="Blend options"><Gear size={15} color="#dcdcdc" hole="#393939" /></IconButton>
      <IconButton $gap={17} aria-label="Lock">
        <svg width="12" height="16" viewBox="0 0 12 16"><rect y="6.500" width="12" height="9" rx="1" fill="#dcdcdc" /><path d="M2.500 7V4a3.500 3.500 0 0 1 7 0v3" fill="none" stroke="#dcdcdc" strokeWidth="1.500" /></svg>
      </IconButton>
    </LayerOptions>
    <LayerList />
    <LayerActions>
      <IconButton aria-label="Edit">
        <svg width="22" height="22" viewBox="0 0 22 22" fill="none" stroke={INK} strokeWidth="1.700"><path d="M12 2H1v19h19V9M9 13l1-4 8.500-8 3 3L13 12z" /></svg>
      </IconButton>
      <IconButton $gap={56} aria-label="Layer effects">
        <svg width="19" height="19" viewBox="0 0 19 19"><rect width="19" height="19" rx="1" fill="#dcdcdc" /><path d="M3 15V4.500h6M3 9.500h4.500M7.500 15l8.500-10.500M9.500 4.500L16 15" stroke="#303030" strokeWidth="2" fill="none" /></svg>
      </IconButton>
      <IconButton $gap={8} aria-label="Mask">
        <svg width="19" height="19" viewBox="0 0 19 19"><rect width="19" height="19" rx="1" fill="#dcdcdc" /><circle cx="9.500" cy="9.500" r="5.500" fill="#363636" /></svg>
      </IconButton>
      <IconButton $gap={9} aria-label="Live filter">
        <svg width="16" height="19" viewBox="0 0 16 19" fill="#dcdcdc"><path d="M0 0h16v2c-2 3-6 5-6 7.500S14 14 16 17v2H0v-2c2-3 6-5 6-7.500S2 5 0 2z" /></svg>
      </IconButton>
      <IconButton $gap={9} aria-label="Adjustment">
        <svg width="19" height="19" viewBox="0 0 19 19"><circle cx="9.500" cy="9.500" r="8.700" fill="none" stroke="#dcdcdc" strokeWidth="1.500" /><path d="M15.700 3.300A8.800 8.800 0 0 1 3.300 15.700z" fill="#dcdcdc" /></svg>
      </IconButton>
      <IconButton $gap={53} aria-label="Add mask layer">
        <svg width="19" height="19" viewBox="0 0 19 19"><path d="M1 1h17v17H1z" fill="none" stroke="#dcdcdc" strokeWidth="1.500" /><circle cx="8" cy="8" r="4.500" fill="#dcdcdc" /><path d="M13.500 7v0h2v8.500h-8v-2.500h3.500a3 3 0 0 0 2.500-2z" fill="#dcdcdc" /></svg>
      </IconButton>
      <IconButton $gap={8} aria-label="Add group">
        <svg width="19" height="19" viewBox="0 0 19 19" fill="none" stroke="#dcdcdc" strokeWidth="1.500"><path d="M1 18V2h8v3.500h9V18zM1 5.500h8" /></svg>
      </IconButton>
      <IconButton $gap={8} aria-label="Add pixel layer">
        <svg width="18" height="18" viewBox="0 0 6 6" fill="#e4e4e4" shapeRendering="crispEdges">
          {Array.from({ length: 18 }, (_, i) => <rect key={i} x={(i % 3) * 2 + (Math.floor(i / 3) % 2)} y={Math.floor(i / 3)} width="1" height="1" />)}
        </svg>
      </IconButton>
      <IconButton $gap={10} aria-label="Delete layer"><Trash color="#c8c8c8" /></IconButton>
    </LayerActions>
  </Block>
);

const TransformPanel = () => (
  <section>
    <Panel tabs={['Transform', 'Navigator', 'History']} />
    <TransformBody>
      <AnchorButton aria-label="Anchor point">
        <svg width="48" height="48" viewBox="0 0 48 48" fill="#6c6c6c">
          <rect x="4" y="4" width="40" height="40" />
          {[0, 20, 40].flatMap(x => [0, 20, 40].map(y => <rect key={`${x},${y}`} x={x} y={y} width="8" height="8" />))}
        </svg>
      </AnchorButton>
      <FieldColumn>
        <Field>X: <FieldInput defaultValue="0 px" /></Field>
        <Field>Y: <FieldInput defaultValue="0 px" /></Field>
        <Field $spaced>R: <SelectWrap $width={87}><FlatSelect><option>0 °</option></FlatSelect><Chevron color="#a6a6a6" /></SelectWrap></Field>
      </FieldColumn>
      <FieldColumn>
        <Field>W: <FieldInput defaultValue="0 px" /></Field>
        <Field>H: <FieldInput defaultValue="0 px" /></Field>
        <Field $spaced>S: <SelectWrap $width={87}><FlatSelect><option>0 °</option></FlatSelect><Chevron color="#a6a6a6" /></SelectWrap></Field>
        <ScaleRow>
          <button aria-label="Scale mode">
            <svg width="22" height="20" viewBox="0 0 22 20" fill="none" stroke="#747474" strokeWidth="1.600"><path d="M1 6V1h20v18h-6" strokeDasharray="5 2.500" /><rect x="1" y="10" width="10" height="9" rx="1" fill="#747474" /></svg>
          </button>
          <button aria-label="Scale options"><Chevron color="#e6e6e6" /></button>
        </ScaleRow>
      </FieldColumn>
      <LinkButton aria-label="Lock aspect ratio">
        <svg width="14" height="28" viewBox="0 0 14 28" fill="none" stroke="#8a8a8a" strokeWidth="1.600"><path d="M3 10V2h9v8M3 18v8h9v-8M0 14h5M8 14h5" /></svg>
      </LinkButton>
    </TransformBody>
  </section>
);

export default function App() {
  return (
    <Screen>
      <GlobalStyle />
      <Window>
        <TitleBar>
          <AppMark><AppIcon /></AppMark>
          <MenuBar>{menus.map(m => <MenuItem key={m}>{m}</MenuItem>)}</MenuBar>
          <WindowButtons>
            <ShareButton aria-label="Dock window">
              <svg width="21" height="15" viewBox="0 0 21 15" fill="none" stroke="#e8e8f0" strokeWidth="1.500"><path d="M16 4V1H1v13h15v-2" /><path d="M8 4h6v7H8z" fill="#55555c" stroke="none" /><rect x="14" y="5" width="6" height="6" rx="1" strokeWidth="2" /></svg>
            </ShareButton>
            <button aria-label="Minimise"><svg width="13" height="13" viewBox="0 0 13 13"><path d="M0 8h13v5H0z" fill="#f4f4f4" /></svg></button>
            <button aria-label="Maximise"><svg width="13" height="13" viewBox="0 0 13 13"><path d="M1 1h11v11H1z" fill="none" stroke="#f4f4f4" strokeWidth="1.600" /><path d="M0 0h13v4H0z" fill="#f4f4f4" /></svg></button>
            <button aria-label="Close"><svg width="13" height="13" viewBox="0 0 13 13"><path d="M1 1l11 11M12 1L1 12" stroke="#f4f4f4" strokeWidth="2" /></svg></button>
          </WindowButtons>
        </TitleBar>

        <Toolbar>
          <Mark />
          <PersonaGroup>
            <PersonaList>
              {personas.map(p => <Persona key={p.name} $active={p.active}>{p.icon}{p.name}</Persona>)}
            </PersonaList>
          </PersonaGroup>
          <MoreButton aria-label="More personas">
            <svg width="6" height="22" viewBox="0 0 6 22" fill="#f0f0f0"><circle cx="3" cy="3" r="2.800" /><circle cx="3" cy="11" r="2.800" /><circle cx="3" cy="19" r="2.800" /></svg>
          </MoreButton>
          <ViewGroup>
            <ViewToggle aria-label="Preview mode">
              <svg width="26" height="26" viewBox="0 0 26 26"><circle cx="8.500" cy="8.500" r="8" fill="#c9c9c9" /><rect x="8" y="8" width="17" height="17" rx="1" fill="#2e2e2e" stroke="#2e2e2e" strokeWidth="4" /><rect x="9.500" y="9.500" width="15" height="15" rx="1" fill="none" stroke="#c9c9c9" strokeWidth="1.700" /><path d="M13 21.500l4-9 4 9M14.500 18.500h5" fill="none" stroke="#c9c9c9" strokeWidth="1.800" /></svg>
            </ViewToggle>
            <ViewToggle $active aria-label="Grid mode">
              <svg width="24" height="24" viewBox="0 0 24 24" fill="#e4e4e4">{[0, 8, 16].flatMap(x => [0, 8, 16].map(y => (x === 8 && y === 8 ? null : <rect key={`${x},${y}`} x={x + 0.500} y={y + 0.500} width="7" height="7" rx="1" />)))}</svg>
            </ViewToggle>
          </ViewGroup>
          <ToolbarEnd>
            <IconSlot aria-label="Preview">
              <svg width="26" height="26" viewBox="0 0 26 26" fill="none" stroke="#d8d8d8" strokeWidth="1.600"><path d="M0 3.500h26M0 22.500h26M3.500 0v7M22.500 0v7M3.500 19v7M22.500 19v7" /><path d="M4 13c4-7 14-7 18 0-4 7-14 7-18 0z" fill="#d8d8d8" /><circle cx="13" cy="13" r="4" stroke="#404040" strokeWidth="1.600" /></svg>
            </IconSlot>
            <Rule />
            <IconSlot aria-label="Arrange">
              <svg width="24" height="24" viewBox="0 0 24 24" fill="none" stroke="#5a5a5a" strokeWidth="1.800"><rect x="1" y="1" width="8" height="8" /><path d="M12 7v6H6M17 11v6h-6M22 16v6h-7M14 2l4 4M18 2v4h4" /></svg>
            </IconSlot>
            <Rule />
            <IconSlot aria-label="Flip">
              <svg width="24" height="22" viewBox="0 0 24 22" fill="#575757"><path d="M11 0v21H0z" /><path d="M13 0v21h11z" opacity=".55" /></svg>
            </IconSlot>
            <Rule />
            <IconSlot aria-label="Align">
              <svg width="17" height="15" viewBox="0 0 17 15" fill="#5a5a5a"><rect width="17" height="5" rx="1" /><rect y="9" width="11" height="5" rx="1" /></svg>
            </IconSlot>
            <Rule />
            <SnapButton aria-label="Snapping">
              <svg width="20" height="20" viewBox="0 0 20 20" fill="none" stroke="#e8e8e8" strokeWidth="4"><path d="M4.500 7.500L8 4.500c6-5 12 1.500 8 7l-3 3" /><path d="M1 10.500l2-1.500M9 18.500l2-2" /></svg>
            </SnapButton>
            <button aria-label="Snapping options"><Chevron /></button>
            <ExportButton><CyanBar />Export PNG</ExportButton>
            <button aria-label="Export options"><Chevron /></button>
            <HelpButton aria-label="Help">
              <svg width="25" height="25" viewBox="0 0 25 25"><circle cx="12.500" cy="12.500" r="11.300" fill="none" stroke="#2a86e0" strokeWidth="2" /><path d="M9 9.700c.2-4.600 7.200-4.400 7.100-.3 0 2.500-3.500 2.800-3.500 5.600M12.600 17v2.300" fill="none" stroke="#fff" strokeWidth="2" /></svg>
            </HelpButton>
          </ToolbarEnd>
        </Toolbar>

        <ContextBar>
          <span>No Selection</span>
          <Rule $before={21} $after={8} />
          <CheckLabel>
            <CheckBox type="checkbox" defaultChecked />
            <CheckTick width="12" height="12" viewBox="0 0 12 12"><path d="M1.500 6l3 3 6-6.500" fill="none" stroke="#fff" strokeWidth="1.800" /></CheckTick>
            Auto-select:
          </CheckLabel>
          <Segments>
            <Segment $active aria-label="Select object"><svg width="15" height="22" viewBox="0 0 15 22" fill="none" stroke={INK} strokeWidth="1.700" strokeLinejoin="round"><path d="M1 1v16l4-3 3 6.500 3-1.400-3-6.300h5.500z" /></svg></Segment>
            <Segment aria-label="Select group"><svg width="24" height="24" viewBox="0 0 24 24" fill="none" stroke="#bdbdbd" strokeWidth="1.700"><rect x="1" y="1" width="14" height="14" rx="3" /><path d="M19 8.500c6 5 3 14-4 14-3.500 0-6-2-6.500-4.500M11.500 18c4 1.500 7-1 7-5" /></svg></Segment>
            <Segment aria-label="Select layer"><svg width="22" height="22" viewBox="0 0 22 22" fill="none" stroke="#bdbdbd" strokeWidth="1.800"><path d="M17 5V3a2 2 0 0 0-2-2H3a2 2 0 0 0-2 2v16a2 2 0 0 0 2 2" /><path d="M3 21h16a2 2 0 0 0 2-2V7a2 2 0 0 0-2-2H5v14" /></svg></Segment>
          </Segments>
          <Rule $before={21} $after={12} />
          <PlainButton>Document Setup...</PlainButton>
          <Rule $before={13} $after={13} />
          <PlainButton>App Settings...</PlainButton>
          <Rule $before={13} $after={17} />
          <button aria-label="Selection box">
            <svg width="23" height="23" viewBox="0 0 23 23" fill="none" stroke="#bdbdbd" strokeWidth="1.400"><rect x="1" y="1" width="4" height="4" /><rect x="9.500" y="1" width="4" height="4" /><rect x="18" y="1" width="4" height="4" /><rect x="18" y="9.500" width="4" height="4" /><rect x="18" y="18" width="4" height="4" /><path d="M2 10h11v11H2z" strokeDasharray="2 1.600" /></svg>
          </button>
          <Rule $before={20} $after={17} />
          <button aria-label="Settings"><Gear size={24} color="#bfbfbf" hole="#3a3a3a" /></button>
        </ContextBar>

        <Workspace>
          <ToolRail>
            {toolIcons.map((t, i) => (
              <Tool key={t.name} $active={i === 0} aria-label={t.name}>{t.icon}{t.flyout && <FlyoutMark />}</Tool>
            ))}
            <RailRule />
            <Tool aria-label="Hand"><HandIcon /></Tool>
            <Tool aria-label="Zoom"><ZoomIcon /></Tool>
            <RailMore aria-label="More tools">
              <svg width="28" height="8" viewBox="0 0 28 8" fill="#e0e0e0"><circle cx="4" cy="4" r="3.500" /><circle cx="14" cy="4" r="3.500" /><circle cx="24" cy="4" r="3.500" /></svg>
            </RailMore>
            <RailSwatch aria-label="Stroke and fill colours"><StrokeFillStack /></RailSwatch>
          </ToolRail>

          <PagesPanel />

          <DocumentArea>
            <DocTab>
              <span>&lt;Untitled&gt; (15.0%)</span>
              <button aria-label="Close document"><svg width="10" height="10" viewBox="0 0 10 10"><path d="M1 1l8 8M9 1L1 9" stroke="#e0e0e0" strokeWidth="2" /></svg></button>
            </DocTab>
            <CanvasRow>
              <Canvas>
                <CanvasSpread $first><CanvasPage /></CanvasSpread>
                <CanvasSpread><CanvasPage /><CanvasPage /></CanvasSpread>
                <CanvasSpread><CanvasPage /><CanvasPage /></CanvasSpread>
              </Canvas>
              <ScrollRail><ScrollThumb $size={165} $start={170} /></ScrollRail>
            </CanvasRow>
            <CanvasFoot><ScrollThumb as="div" $horizontal $size={570} $start={693} /></CanvasFoot>
          </DocumentArea>

          <SidePanel $width={357}>
            <ColourPanel />
            <LayersPanel />
            <TransformPanel />
          </SidePanel>
        </Workspace>

        <StatusBar>
          <IconButton aria-label="First page"><svg width="15" height="14" viewBox="0 0 15 14" fill="#8c8c8c"><path d="M0 0h2v14H0zM14.500 0v14L3 7z" /></svg></IconButton>
          <IconButton $gap={11} aria-label="Previous page"><svg width="12" height="14" viewBox="0 0 12 14" fill="#8c8c8c"><path d="M12 0v14L0 7z" /></svg></IconButton>
          <PageCount>1 of 26</PageCount>
          <IconButton aria-label="Next page"><svg width="12" height="14" viewBox="0 0 12 14" fill="#ededed"><path d="M0 0v14l12-7z" /></svg></IconButton>
          <IconButton $gap={11} aria-label="Last page"><svg width="15" height="14" viewBox="0 0 15 14" fill="#ededed"><path d="M0 0v14l11-7zM12.500 0h2v14h-2z" /></svg></IconButton>
          <IconButton $gap={11} aria-label="Page view"><svg width="17" height="19" viewBox="0 0 17 19" fill="none" stroke="#8c8c8c" strokeWidth="1.600"><path d="M1 1h12v15H1zM16 4v14H4M3.500 4.500h7M3.500 7.500h7M3.500 10.500h7M3.500 13.500h7" /></svg></IconButton>
          <IconButton $gap={10} aria-label="Spread view"><svg width="18" height="19" viewBox="0 0 18 19" fill="none" stroke="#c6c6c6" strokeWidth="1.700"><rect x="1" y="1" width="12" height="14" rx="1" /><rect x="4" y="4" width="6" height="5" rx="2" /><path d="M2 12h10M15 5c3 4 2 9 0 10M4 18h10" /></svg></IconButton>
          <IconButton $gap={16} aria-label="Preflight"><svg width="20" height="20" viewBox="0 0 20 20"><path d="M14 2h4v17H5v-3" fill="none" stroke="#c6c6c6" strokeWidth="1.600" /><circle cx="8" cy="8" r="7.800" fill="#34c46c" /><path d="M4.500 8l2.700 2.800 4.500-5" fill="none" stroke="#26332b" strokeWidth="2" /></svg></IconButton>
          <StatusHint><b>Drag</b> to marquee select. <b>Click</b> an object to select it. <b>Right-Click</b> during marquee select to toggle intersection behaviour.</StatusHint>
        </StatusBar>
      </Window>
    </Screen>
  );
}
